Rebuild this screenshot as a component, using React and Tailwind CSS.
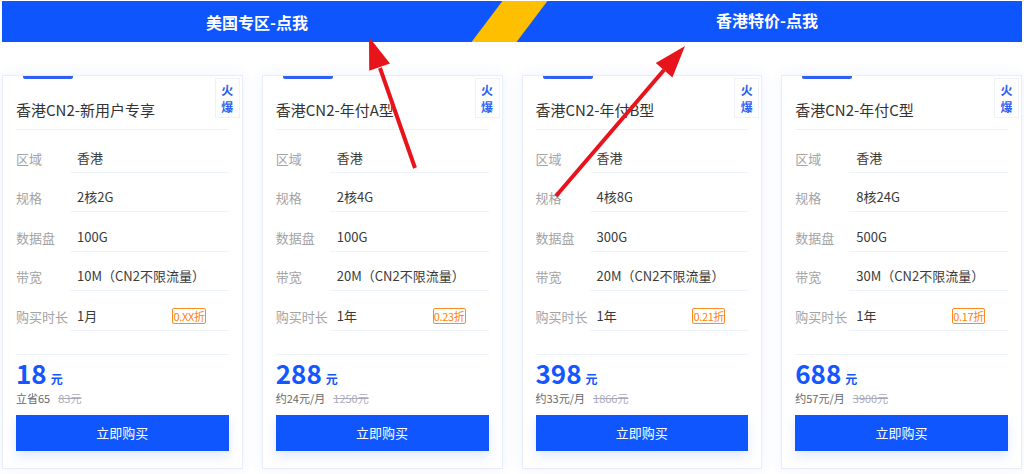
import React from "react";

const plans = [
  {
    title: "香港CN2-新用户专享",
    spec: "2核2G",
    disk: "100G",
    bw: "10M（CN2不限流量）",
    term: "1月",
    off: "0.XX折",
    price: "18",
    sub: "立省65",
    old: "83元",
  },
  {
    title: "香港CN2-年付A型",
    spec: "2核4G",
    disk: "100G",
    bw: "20M（CN2不限流量）",
    term: "1年",
    off: "0.23折",
    price: "288",
    sub: "约24元/月",
    old: "1250元",
  },
  {
    title: "香港CN2-年付B型",
    spec: "4核8G",
    disk: "300G",
    bw: "20M（CN2不限流量）",
    term: "1年",
    off: "0.21折",
    price: "398",
    sub: "约33元/月",
    old: "1866元",
  },
  {
    title: "香港CN2-年付C型",
    spec: "8核24G",
    disk: "500G",
    bw: "30M（CN2不限流量）",
    term: "1年",
    off: "0.17折",
    price: "688",
    sub: "约57元/月",
    old: "3900元",
  },
];

const Row = ({ label, value, off }) => (
  <div className="flex h-[39.6px] items-end">
    <div className="w-[54px] pb-[4px] text-[13px] leading-[20px] text-[#a3a3a3]">{label}</div>
    <div className="flex h-full flex-1 items-end justify-between border-b border-[#eef2fb] pb-[4px] pl-[7px]">
      <span className="text-[13px] leading-[20px] text-[#3a3a3a]">{value}</span>
      {off && (
        <span className="mb-[2px] mr-[23px] h-[16px] rounded-[2px] border border-[#ff8a1f] text-[11px] leading-[14px] tracking-[-0.3px] text-[#ff7f0f]">
          {off}
        </span>
      )}
    </div>
  </div>
);

const Card = ({ plan }) => (
  <div className="relative h-[394px] border border-[#e8edfb] bg-white shadow-[0_0_14px_rgba(40,90,220,0.07)]">
    <div className="ml-[20px] h-[3px] w-[50px] rounded-b-[2px] bg-[#2f60f2]" />
    {/* hot badge */}
    <div className="absolute right-[2px] top-[2px] flex h-[40px] w-[25px] flex-col items-center justify-center border border-[#eef1f8] bg-white text-[12px] font-bold leading-[17px] text-[#2d5ff0]">
      <span>火</span>
      <span>爆</span>
    </div>
    <div className="px-[13px]">
      <div className="flex h-[51px] items-end border-b border-[#eef2fb] pb-[8px] text-[15px] leading-[22px] text-[#333]">
        {plan.title}
      </div>
      <div className="mt-[3px]">
        <Row label="区域" value="香港" />
        <Row label="规格" value={plan.spec} />
        <Row label="数据盘" value={plan.disk} />
        <Row label="带宽" value={plan.bw} />
        <Row label="购买时长" value={plan.term} off={plan.off} />
      </div>
      <div className="mt-[23px] border-t border-[#eef2fb] pt-[5px]">
        <div className="flex items-baseline text-[#1456ff]">
          <span className="text-[26px] font-bold leading-[26px]">{plan.price}</span>
          <span className="ml-[4px] text-[12px] font-bold">元</span>
        </div>
        <div className="mt-[2px] flex text-[11px] leading-[16px]">
          <span className="text-[#666]">{plan.sub}</span>
          <span className="ml-[8px] text-[#aab] line-through">{plan.old}</span>
        </div>
        <button className="mt-[9px] flex h-[36px] w-full items-center justify-center bg-[#0f56ff] text-[13px] text-white shadow-[0_6px_12px_rgba(15,86,255,0.12)]">
          立即购买
        </button>
      </div>
    </div>
  </div>
);

export default function App() {
  return (
    <div className="relative h-[474px] w-[1024px] overflow-hidden bg-white font-['Noto_Sans_CJK_SC','Noto_Sans',sans-serif]">
      {/* top banner */}
      <div className="relative mx-[2px] mt-[1px] flex h-[41px] overflow-hidden bg-[#0f55fe]">
        <a className="relative z-10 flex flex-1 items-center justify-center pt-[1px] text-[16px] font-bold text-white">
          美国专区-点我
        </a>
        <div className="absolute left-[485px] top-0 h-full w-[45px] -skew-x-[37deg] bg-[#fdbf00]" />
        <a className="relative z-10 flex flex-1 items-start justify-center pt-[7px] text-[16px] font-bold text-white">
          香港特价-点我
        </a>
      </div>

      <div className="mt-[33px] grid grid-cols-4 gap-[19px] px-[2px]">
        {plans.map((p) => (
          <Card key={p.title} plan={p} />
        ))}
      </div>

      {/* red arrows drawn over the page */}
      <svg className="pointer-events-none absolute left-0 top-0" width="1024" height="474">
        <line x1="415" y1="168" x2="380" y2="68" stroke="#e8141c" strokeWidth="4" />
        <polygon points="369,37 390,63.6 369.2,70.8" fill="#e8141c" />
        <line x1="556" y1="196" x2="664" y2="70" stroke="#e8141c" strokeWidth="4" />
        <polygon points="685,46 672.4,77.5 655.8,63.1" fill="#e8141c" />
      </svg>
    </div>
  );
}
